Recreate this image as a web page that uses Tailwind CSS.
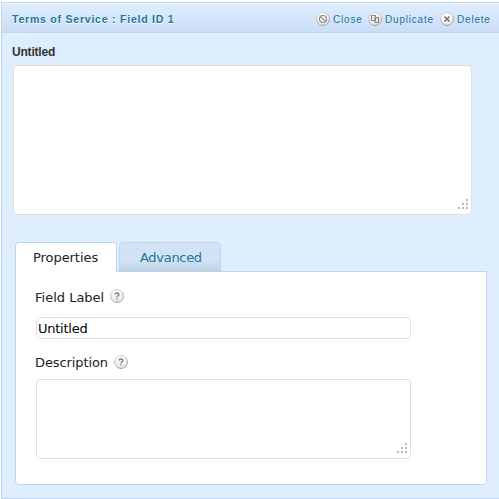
<!DOCTYPE html>
<html lang="en">
<head>
<meta charset="utf-8">
<title>Form field editor</title>
<script src="https://cdn.jsdelivr.net/npm/@tailwindcss/browser@4"></script>
</head>
<body class="bg-white overflow-hidden">
<svg class="absolute w-0 h-0">
  <defs>
    <linearGradient id="rim" x1="0" y1="0" x2="0.6" y2="1"><stop offset="0" stop-color="#d8d8d8"/><stop offset="1" stop-color="#999"/></linearGradient>
    <linearGradient id="face" x1="0" y1="0" x2="0" y2="1"><stop offset="0" stop-color="#fff"/><stop offset="1" stop-color="#e6e6e6"/></linearGradient>
    <symbol id="disc" viewBox="0 0 14 14"><circle cx="7" cy="7" r="6.4" fill="url(#face)" stroke="url(#rim)" stroke-width="1"/></symbol>
    <symbol id="grip" viewBox="0 0 10 10"><path fill="#b8b8b8" d="M8 0h2v2H8zM4 4h2v2H4zM8 4h2v2H8zM0 8h2v2H0zM4 8h2v2H4zM8 8h2v2H8z"/></symbol>
    <symbol id="help" viewBox="0 0 14 14"><use href="#disc" width="14" height="14"/><path d="M5.1 5.6C5.1 3.4 8.9 3.4 8.9 5.5C8.9 6.8 7 6.7 7 8.3M7 9.2v1.4" fill="none" stroke="#808080" stroke-width="1.4"/></symbol>
  </defs>
</svg>
<main class="ml-px mt-[2px] w-[520px] h-[497px] border border-[#c2d5f0] bg-[#dfeeff] text-[#222] font-['DejaVu_Sans',sans-serif]">
  <header class="h-[30px] w-full border-b border-[#c2d5f0] bg-linear-to-b from-[#dfeeff] to-[#cbddf6] flex items-center pl-[10px] font-['Liberation_Sans',sans-serif] text-[#21759b] shadow-[inset_0_1px_0_#eaf4ff]">
    <div class="w-[304px] text-[10.5px] font-bold tracking-[0.78px] whitespace-nowrap pt-[5px] [text-shadow:0_1px_0_#fff]">Terms of Service : Field ID 1</div>
    <nav class="flex text-[10px] leading-[14px] tracking-[0.8px] whitespace-nowrap pt-[3px]">
      <a class="flex items-center w-[52px]"><svg class="w-[14px] h-[14px] mr-[3px] shrink-0" viewBox="0 0 14 14"><use href="#disc" width="14" height="14"/><circle cx="7" cy="7" r="3.5" fill="none" stroke="#888" stroke-width="1.2"/><path d="M4.6 4.6l4.8 4.8" stroke="#888" stroke-width="1.2"/></svg><span class="pt-px">Close</span></a>
      <a class="flex items-center w-[72px]"><svg class="w-[14px] h-[14px] mr-[3px] shrink-0" viewBox="0 0 14 14"><use href="#disc" width="14" height="14"/><path d="M3.5 3.5h4v5h-4zM7 5.5h3.5v5H7z" fill="#eee" stroke="#888" stroke-width="1.2"/></svg><span class="pt-px">Duplicate</span></a>
      <a class="flex items-center"><svg class="w-[14px] h-[14px] mr-[3px] shrink-0" viewBox="0 0 14 14"><use href="#disc" width="14" height="14"/><path d="M4.5 4.5l5 5M9.5 4.5l-5 5" stroke="#777" stroke-width="1.6"/></svg><span class="pt-px">Delete</span></a>
    </nav>
  </header>
  <section class="pl-[10px]">
    <div class="h-[32px] pt-[11px] leading-[16px] text-[12px] tracking-[-0.2px] font-bold text-[#333] font-['Liberation_Sans',sans-serif]">Untitled</div>
    <div class="ml-px w-[459px] h-[150px] bg-white border border-[#dfdfdf] rounded-[4px] flex items-end justify-end pr-[3px] pb-[5px]"><svg class="w-[10px] h-[10px]"><use href="#grip"/></svg></div>
  </section>
  <section class="mt-[27px] ml-[13px]">
    <div class="flex gap-[2px] h-[30px] -mb-px relative text-[13px]">
      <div class="w-[102px] h-[30px] bg-white border border-b-0 border-[#c2d5f0] rounded-t-[4px] pl-[17px] tracking-[-0.06px] leading-[30px]">Properties</div>
      <div class="w-[102px] h-[30px] border border-[#c2d5f0] rounded-t-[4px] bg-linear-to-b from-[#d2e3f4] from-60% to-[#bfd1e5] pl-[20px] tracking-[-0.3px] leading-[30px] text-[#21759b]">Advanced</div>
    </div>
    <div class="w-[472px] h-[214px] bg-white border border-[#c2d5f0] rounded-b-[4px] pl-[20px] text-[13px]">
      <div class="h-[45px] pt-[17px] flex items-start leading-[18px] gap-[6px] -ml-px"><span>Field Label</span><svg class="w-[14px] h-[14px]"><use href="#help"/></svg></div>
      <div class="w-[375px] h-[22px] border border-[#dfdfdf] rounded-[4px] pl-[1px] tracking-[-0.25px] leading-[21px] text-black">Untitled</div>
      <div class="h-[40px] pt-[16px] flex items-start leading-[16px] gap-[6px] -ml-px"><span class="tracking-[-0.1px]">Description</span><svg class="w-[14px] h-[14px]"><use href="#help"/></svg></div>
      <div class="w-[375px] h-[80px] border border-[#dfdfdf] rounded-[4px] flex items-end justify-end pr-[3px] pb-[5px]"><svg class="w-[10px] h-[10px]"><use href="#grip"/></svg></div>
    </div>
  </section>
</main>
</body>
</html>
